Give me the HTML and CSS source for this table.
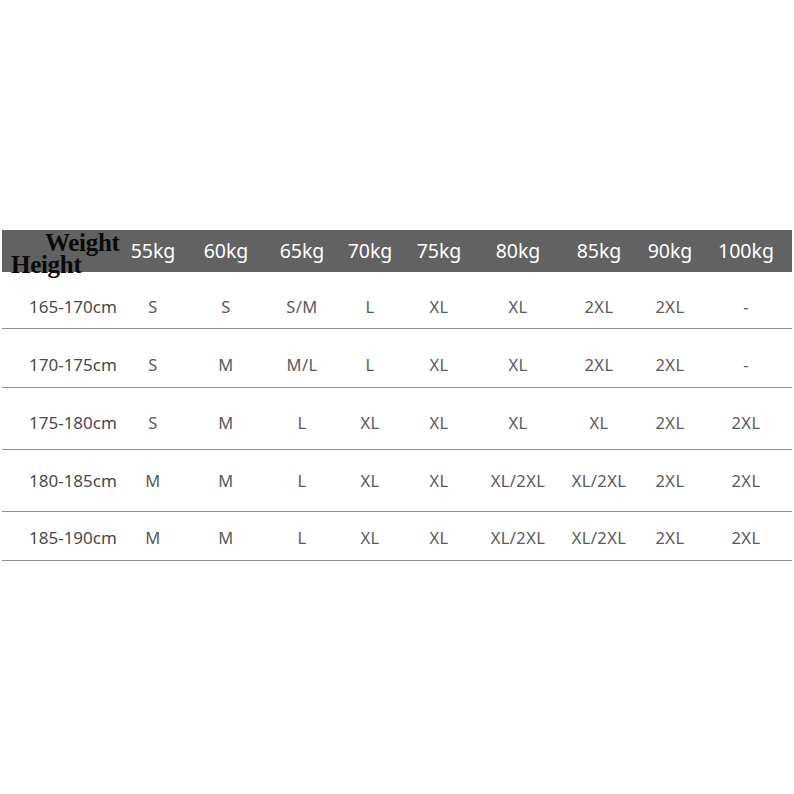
FILE: index.html
```html
<!DOCTYPE html>
<html>
<head>
<meta charset="utf-8">
<link rel="stylesheet" href="styles.css">
</head>
<body>
<div class="page">
  <div class="table">
    <div class="head">
      <div class="corner">
        <span class="w">Weight</span>
        <span class="h">Height</span>
      </div>
      <div class="hc">55kg</div>
      <div class="hc">60kg</div>
      <div class="hc">65kg</div>
      <div class="hc">70kg</div>
      <div class="hc">75kg</div>
      <div class="hc">80kg</div>
      <div class="hc">85kg</div>
      <div class="hc">90kg</div>
      <div class="hc">100kg</div>
    </div>
    <div class="row r1">
      <div class="lab">165-170cm</div><div>S</div><div>S</div><div>S/M</div><div>L</div><div>XL</div><div>XL</div><div>2XL</div><div>2XL</div><div>-</div>
    </div>
    <div class="row r2">
      <div class="lab">170-175cm</div><div>S</div><div>M</div><div>M/L</div><div>L</div><div>XL</div><div>XL</div><div>2XL</div><div>2XL</div><div>-</div>
    </div>
    <div class="row r3">
      <div class="lab">175-180cm</div><div>S</div><div>M</div><div>L</div><div>XL</div><div>XL</div><div>XL</div><div>XL</div><div>2XL</div><div>2XL</div>
    </div>
    <div class="row r4">
      <div class="lab">180-185cm</div><div>M</div><div>M</div><div>L</div><div>XL</div><div>XL</div><div>XL/2XL</div><div>XL/2XL</div><div>2XL</div><div>2XL</div>
    </div>
    <div class="row r5">
      <div class="lab">185-190cm</div><div>M</div><div>M</div><div>L</div><div>XL</div><div>XL</div><div>XL/2XL</div><div>XL/2XL</div><div>2XL</div><div>2XL</div>
    </div>
  </div>
</div>
</body>
</html>
```

FILE: styles.css
```css
html, body {
  margin: 0;
  padding: 0;
  background: #ffffff;
}

.page {
  width: 794px;
  height: 794px;
  padding-top: 230px;
  padding-left: 2px;
  box-sizing: border-box;
  font-family: "Noto Sans", "Open Sans", sans-serif;
}

.table {
  width: 790px;
}

.head,
.row {
  display: grid;
  grid-template-columns: 116px 70px 76px 76px 60px 78px 80px 82px 60px 92px;
}

.head {
  height: 42px;
  background: #626262;
  color: #ffffff;
  align-items: center;
}

.hc {
  text-align: center;
  font-size: 19.5px;
  line-height: 42px;
}

.corner {
  position: relative;
  height: 42px;
}

.corner .w,
.corner .h {
  position: absolute;
  font-family: "Liberation Serif", "Times New Roman", serif;
  font-weight: bold;
  font-size: 25px;
  letter-spacing: -0.3px;
  color: #0a0a0a;
  line-height: 1;
  white-space: nowrap;
}

.corner .w {
  left: 43px;
  top: 0px;
}

.corner .h {
  left: 9px;
  top: 22px;
}

.row {
  color: #5a5a5a;
  font-size: 16.5px;
  line-height: 20px;
  letter-spacing: 0.4px;
  white-space: nowrap;
  border-bottom: 1px solid #8f8f8f;
  box-sizing: border-box;
}

.row > div {
  text-align: center;
}

.row > .lab {
  text-align: left;
  padding-left: 27px;
  font-size: 17px;
  letter-spacing: 0;
  color: #4a4a4a;
}

.r1 { height: 57px; padding-top: 25px; }
.r2 { height: 59px; padding-top: 26px; }
.r3 { height: 62px; padding-top: 25px; }
.r4 { height: 62px; padding-top: 21px; }
.r5 { height: 49px; padding-top: 16px; }
```
